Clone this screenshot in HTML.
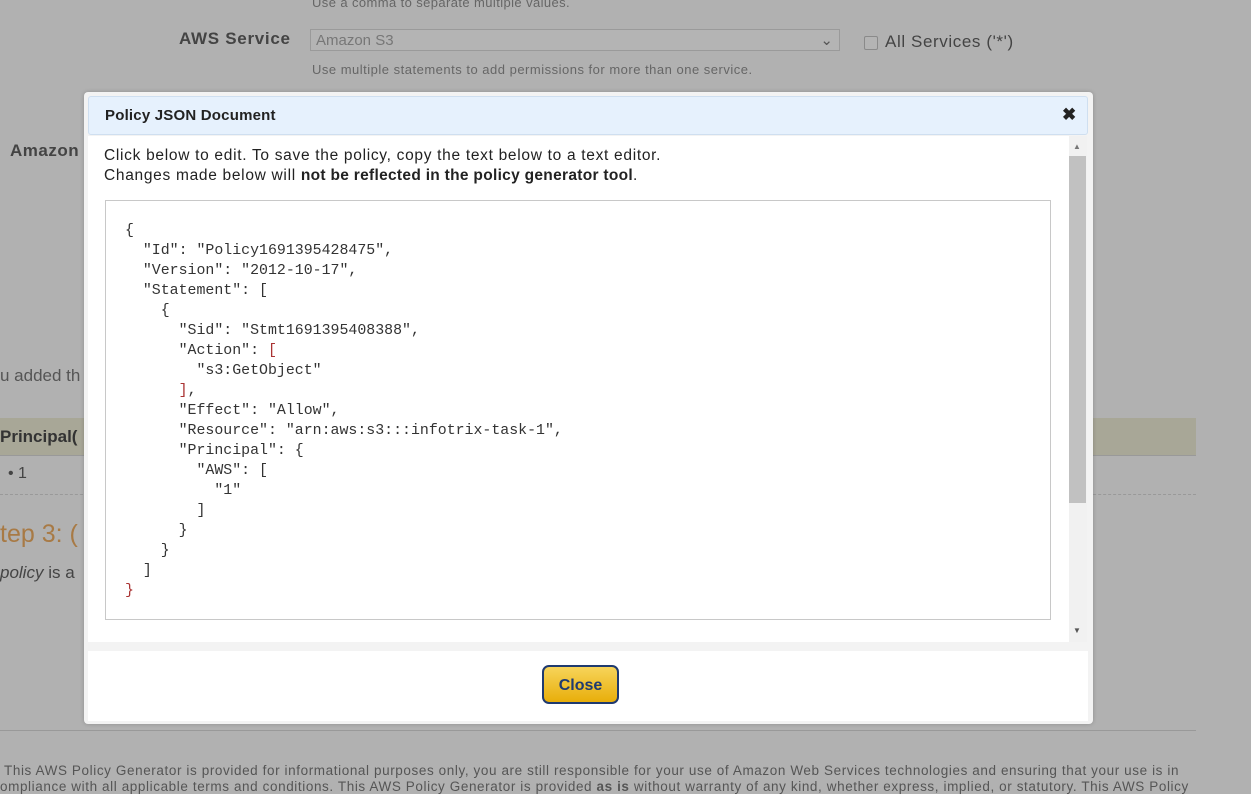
<!DOCTYPE html>
<html><head><style>
body{margin:0;width:1251px;height:790px;overflow:hidden;background:#b1b1b1;font-family:"Liberation Sans",sans-serif;position:relative;color:#3a3a3a}
.a{position:absolute;white-space:nowrap}
.code{font-family:"Liberation Mono",monospace;font-size:14.9px;line-height:20px;color:#333;white-space:pre;position:absolute;left:125px;top:221px}
.r{color:#a33}
</style></head><body>
<div class="a" style="left:312px;top:-5px;font-size:13px;color:#666;letter-spacing:.4px">Use a comma to separate multiple values.</div>
<div class="a" style="left:179px;top:29px;font-size:17px;font-weight:bold;color:#444;letter-spacing:.7px">AWS Service</div>
<div class="a" style="left:310px;top:29px;width:530px;height:22px;border:1px solid #9a9a9a;background:#b4b4b4;font-size:15px;color:#777;line-height:22px;box-sizing:border-box;padding-left:5px">Amazon S3<span style="position:absolute;right:6px;color:#555">&#8964;</span></div>
<div class="a" style="left:864px;top:36px;width:12px;height:12px;border:1px solid #8a8a8a;border-radius:2px;background:#b4b4b4"></div>
<div class="a" style="left:885px;top:32px;font-size:17px;color:#444;letter-spacing:.6px">All Services ('*')</div>
<div class="a" style="left:312px;top:62px;font-size:13px;color:#666;letter-spacing:.5px">Use multiple statements to add permissions for more than one service.</div>
<div class="a" style="left:10px;top:141px;font-size:17px;font-weight:bold;color:#444;letter-spacing:.5px">Amazon</div>
<div class="a" style="left:0;top:366px;font-size:17px;color:#555">u added th</div>
<div class="a" style="left:0;top:418px;width:1196px;height:37px;background:#a8a797;border-bottom:1px solid #999"></div>
<div class="a" style="left:0;top:427px;font-size:17px;font-weight:bold;color:#333">Principal(</div>
<div class="a" style="left:8px;top:465px;font-size:16px;color:#444">• 1</div>
<div class="a" style="left:0;top:494px;width:1196px;border-top:1px dashed #999"></div>
<div class="a" style="left:0;top:520px;font-size:25px;color:#a87a45">tep 3: (</div>
<div class="a" style="left:0;top:563px;font-size:17px;color:#444"><i>policy</i> is a</div>
<div class="a" style="left:0;top:730px;width:1196px;border-top:1px solid #999"></div>
<div class="a" style="left:4px;top:763px;font-size:13.5px;color:#555;letter-spacing:.6px">This AWS Policy Generator is provided for informational purposes only, you are still responsible for your use of Amazon Web Services technologies and ensuring that your use is in</div>
<div class="a" style="left:0;top:779px;font-size:13.5px;color:#555;letter-spacing:.6px">ompliance with all applicable terms and conditions. This AWS Policy Generator is provided <b>as is</b> without warranty of any kind, whether express, implied, or statutory. This AWS Policy</div>

<div class="a" style="left:84px;top:92px;width:1009px;height:632px;background:#f3f3f3;border-radius:4px;box-shadow:0 0 4px rgba(0,0,0,.2)"></div>
<div class="a" style="left:88px;top:96px;width:1000px;height:39px;background:#e6f1fd;border:1px solid #cfdff0;border-radius:3px;box-sizing:border-box"></div>
<div class="a" style="left:105px;top:107px;font-size:15px;font-weight:bold;color:#222;letter-spacing:.2px">Policy JSON Document</div>
<div class="a" style="left:1062px;top:105px;font-size:17px;font-weight:bold;color:#222">✖</div>
<div class="a" style="left:88px;top:136px;width:981px;height:506px;background:#fff"></div>
<div class="a" style="left:1069px;top:136px;width:18px;height:506px;background:#f1f1f1"></div>
<div class="a" style="left:1069px;top:156px;width:17px;height:347px;background:#c1c1c1"></div>
<div class="a" style="left:1073px;top:142px;font-size:8px;color:#777">▲</div>
<div class="a" style="left:1073px;top:626px;font-size:8px;color:#555">▼</div>
<div class="a" style="left:104px;top:146px;font-size:15.5px;line-height:20px;color:#222;letter-spacing:.7px">Click below to edit. To save the policy, copy the text below to a text editor.<br>Changes made below will <b style="letter-spacing:.3px">not be reflected in the policy generator tool</b>.</div>
<div class="a" style="left:105px;top:200px;width:946px;height:420px;border:1px solid #c8c8c8;box-sizing:border-box;background:#fff"></div>
<div class="code">{
  "Id": "Policy1691395428475",
  "Version": "2012-10-17",
  "Statement": [
    {
      "Sid": "Stmt1691395408388",
      "Action": <span class="r">[</span>
        "s3:GetObject"
      <span class="r">]</span>,
      "Effect": "Allow",
      "Resource": "arn:aws:s3:::infotrix-task-1",
      "Principal": {
        "AWS": [
          "1"
        ]
      }
    }
  ]
<span class="r">}</span></div>
<div class="a" style="left:88px;top:651px;width:1000px;height:70px;background:#fff"></div>
<div class="a" style="left:542px;top:665px;width:77px;height:39px;box-sizing:border-box;border:2px solid #1f3a70;border-radius:7px;background:linear-gradient(#f7d45a,#e8ae0a);font-size:16px;font-weight:bold;color:#1f3a70;text-align:center;line-height:37px">Close</div>
</body></html>
